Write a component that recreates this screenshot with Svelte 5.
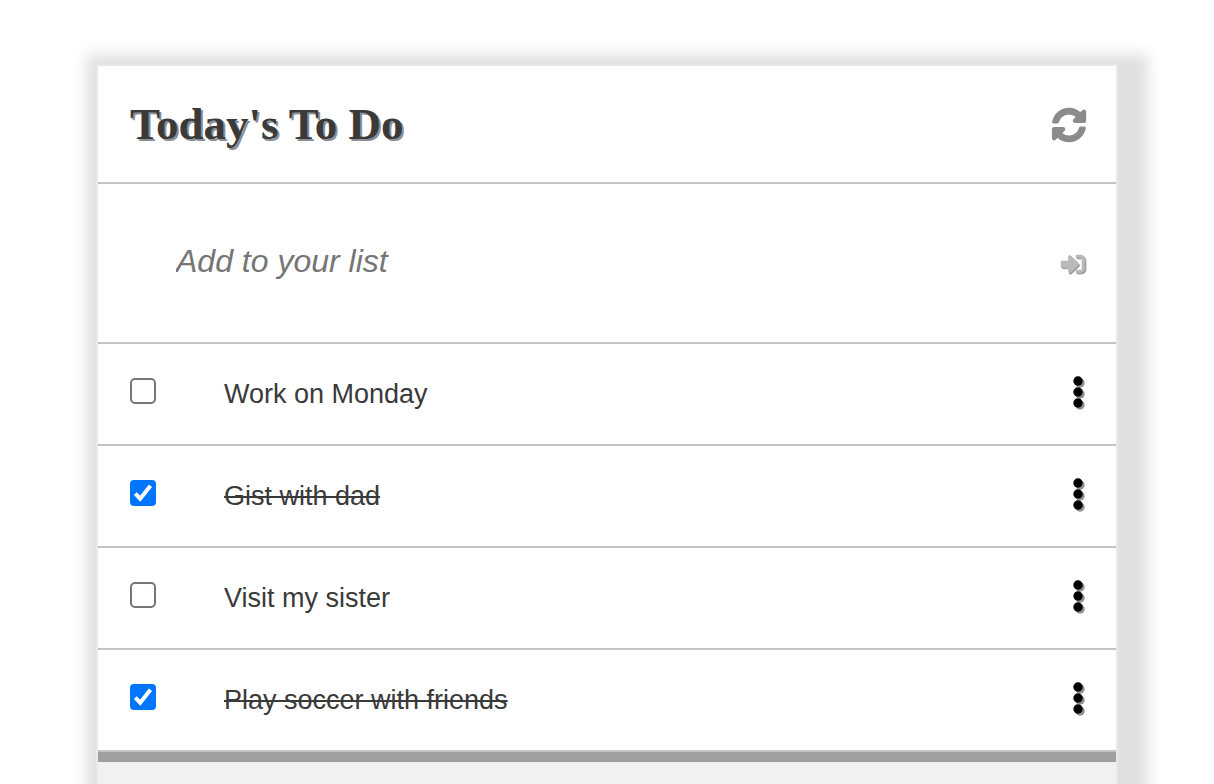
<script>
  let draft = $state('');
  let tasks = $state([
    { id: 1, text: 'Work on Monday', done: false },
    { id: 2, text: 'Gist with dad', done: true },
    { id: 3, text: 'Visit my sister', done: false },
    { id: 4, text: 'Play soccer with friends', done: true }
  ]);

  function add(event) {
    event.preventDefault();
    const text = draft.trim();
    if (!text) return;
    tasks.push({ id: tasks.length + 1, text, done: false });
    draft = '';
  }
</script>

<main class="page">
  <section class="card">
    <header class="row head">
      <h1>Today's To Do</h1>
      <button type="button" class="icon" aria-label="Refresh">
        <svg class="refresh" viewBox="0 0 512 512" aria-hidden="true">
          <path d="M370.72 133.28C339.458 104.008 298.888 87.962 255.848 88c-77.458.068-144.328 53.178-162.791 126.85-1.344 5.363-6.122 9.15-11.651 9.15H24.103c-7.498 0-13.194-6.807-11.807-14.176C33.933 94.924 134.813 8 256 8c66.448 0 126.791 26.136 171.315 68.685L463.03 40.97C478.149 25.851 504 36.559 504 57.941V192c0 13.255-10.745 24-24 24H345.941c-21.382 0-32.09-25.851-16.971-40.971l41.75-41.749zM32 296h134.059c21.382 0 32.09 25.851 16.971 40.971l-41.75 41.75c31.262 29.273 71.835 45.319 114.876 45.28 77.418-.07 144.315-53.144 162.787-126.849 1.344-5.363 6.122-9.15 11.651-9.15h57.304c7.498 0 13.194 6.807 11.807 14.176C478.067 417.076 377.187 504 256 504c-66.448 0-126.791-26.136-171.315-68.685L48.97 471.03C33.851 486.149 8 475.441 8 454.059V320c0-13.255 10.745-24 24-24z" />
        </svg>
      </button>
    </header>

    <form class="row entry" onsubmit={add}>
      <input type="text" class="draft" placeholder="Add to your list" aria-label="Add to your list" bind:value={draft} />
      <button type="submit" class="icon" aria-label="Add task">
        <svg class="enter" viewBox="0 0 512 512" aria-hidden="true">
          <path d="M416 448h-84c-6.6 0-12-5.4-12-12v-40c0-6.6 5.4-12 12-12h84c17.7 0 32-14.3 32-32V160c0-17.7-14.3-32-32-32h-84c-6.6 0-12-5.4-12-12V76c0-6.6 5.4-12 12-12h84c53 0 96 43 96 96v192c0 53-43 96-96 96zm-47-201L201 79c-15-15-41-4.5-41 17v96H24c-13.3 0-24 10.7-24 24v96c0 13.3 10.7 24 24 24h136v96c0 21.5 26 32 41 17l168-168c9.3-9.4 9.3-24.6 0-34z" />
        </svg>
      </button>
    </form>

    <ul class="tasks">
      {#each tasks as task (task.id)}
        <li class="row task">
          <input type="checkbox" id="task-{task.id}" bind:checked={task.done} />
          <label for="task-{task.id}" class:done={task.done}>{task.text}</label>
          <button type="button" class="icon" aria-label="Options for {task.text}">
            <svg class="dots" viewBox="0 0 12 34" aria-hidden="true">
              <circle cx="6" cy="6" r="4.7" />
              <circle cx="6" cy="17" r="4.7" />
              <circle cx="6" cy="28" r="4.7" />
            </svg>
          </button>
        </li>
      {/each}
    </ul>

    <footer class="foot"></footer>
  </section>
</main>

<style>
  :global(body) {
    margin: 0;
    background: #fff;
  }

  .page {
    box-sizing: border-box;
    height: 100vh;
    overflow: hidden;
    padding: 64px 96px 0;
    font-family: "Liberation Sans", Arial, sans-serif;
    color: #3a3a3a;
  }

  .card {
    border: 2px solid #e8e8e8;
    background: #fff;
    box-shadow: 10px 10px 14px 20px #e0e0e0;
  }

  .row {
    display: flex;
    align-items: center;
    padding: 0 30px 0 32px;
    border-bottom: 2px solid #c4c4c4;
  }

  .head {
    justify-content: space-between;
    height: 116px;
  }

  h1 {
    margin: 0;
    font: bold 45px/56px "Liberation Serif", "Times New Roman", serif;
    text-shadow: 2px 2px 0 #8b8f96;
  }

  .icon {
    display: flex;
    padding: 0;
    border: 0;
    background: none;
    cursor: pointer;
  }

  .refresh {
    width: 34px;
    height: 34px;
    margin-top: 2px;
    overflow: visible;
    fill: #8b8b8b;
    stroke: #8b8b8b;
    stroke-width: 20;
  }

  .entry {
    height: 158px;
  }

  .draft {
    flex: 1;
    min-width: 0;
    height: 64px;
    padding: 0 0 4px 46px;
    border: 0;
    outline: none;
    background: none;
    font: italic 32px "Liberation Sans", Arial, sans-serif;
    color: #3a3a3a;
  }

  .draft::placeholder {
    color: #757575;
    opacity: 1;
  }

  .enter {
    width: 24px;
    height: 24px;
    margin: 2px 1px 0 0;
    overflow: visible;
    fill: #bab8b9;
    stroke: #bab8b9;
    stroke-width: 12;
    filter: drop-shadow(1px 1px 0 #8f8f8f);
  }

  .tasks {
    margin: 0;
    padding: 0;
    list-style: none;
  }

  .task {
    height: 100px;
  }

  .task input {
    appearance: none;
    box-sizing: border-box;
    width: 26px;
    height: 26px;
    margin: 0 68px 6px 0;
    border: 2px solid #767676;
    border-radius: 5px;
    background: #fff;
  }

  .task input:checked {
    border: 0;
    border-radius: 4px;
    background: #0075ff url("data:image/svg+xml,%3Csvg xmlns='http://www.w3.org/2000/svg' viewBox='0 0 26 26'%3E%3Cpath d='M5.300 13.600 10.200 18.700 20.500 5.800' fill='none' stroke='white' stroke-width='4'/%3E%3C/svg%3E") center / 26px 26px no-repeat;
  }

  label {
    flex: 1;
    font-size: 27px;
    line-height: 32px;
  }

  .done {
    text-decoration: line-through;
  }

  .dots {
    width: 12px;
    height: 34px;
    margin: 0 2px 4px 0;
    fill: #000;
    filter: drop-shadow(2px 2px 0 #8b8f96);
  }

  .foot {
    min-height: 90px;
    border-top: 10px solid #a09e9f;
    background: #f2f0f1;
  }
</style>
